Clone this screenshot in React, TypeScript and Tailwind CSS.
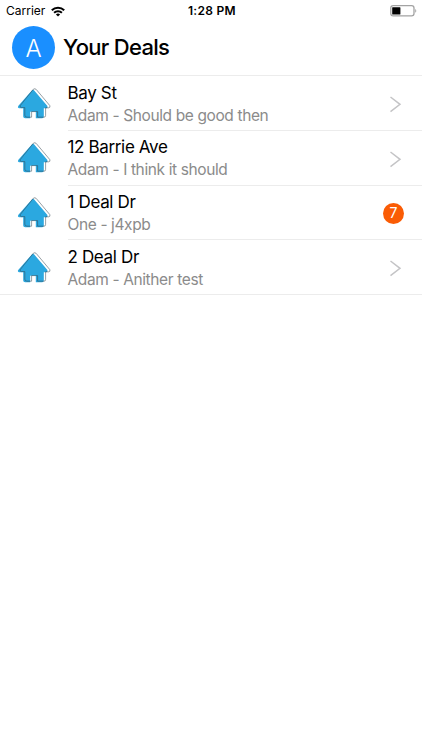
interface Deal {
  id: number;
  address: string;
  message: string;
  unread?: number;
}

const deals: Deal[] = [
  { id: 1, address: 'Bay St', message: 'Adam - Should be good then' },
  { id: 2, address: '12 Barrie Ave', message: 'Adam - I think it should' },
  { id: 3, address: '1 Deal Dr', message: 'One - j4xpb', unread: 7 },
  { id: 4, address: '2 Deal Dr', message: 'Adam - Anither test' },
];

function WifiIcon() {
  return (
    <svg width="14" height="11" viewBox="0 0 14 11" fill="none" stroke="#000" strokeWidth="2">
      <path d="M0.8 4.3a8.8 8.8 0 0 1 12.4 0" />
      <path d="M3.1 6.8a5.5 5.5 0 0 1 7.8 0" />
      <path d="M7 10.6 4.9 8.5a3 3 0 0 1 4.2 0Z" fill="#000" stroke="none" />
    </svg>
  );
}

function BatteryIcon() {
  return (
    <svg width="28" height="12" viewBox="0 0 28 12">
      <rect x="0.8" y="0.7" width="23.2" height="10.2" rx="2.4" fill="#fff" stroke="#a3a3a3" strokeWidth="1.3" />
      <rect x="2.2" y="2.2" width="8.2" height="7.3" rx="0.5" fill="#000" />
      <path d="M25.3 4c1.3.4 1.3 3.4 0 3.8Z" fill="#999" />
    </svg>
  );
}

function HouseIcon() {
  return (
    <svg width="34" height="32" viewBox="0 0 34 32">
      <path
        d="M14.8 2.4q1.2-1.2 2.4 0l13 15.4q1 2.2-1 2.4h-2.4v8.4q0 1.6-1.6 1.6h-6.4v-6.4h-5.6v6.4H8.2q-2 0-2-1.8v-8.2H2q-1.8-.4-.8-2.2Z"
        fill="#2ba8e0"
      />
      <path
        d="M16.4 1.2q1.4-1 2.8.2l13.6 16.2q.9 2-1.2 2.2h-3v7.6q0 1.8-1.6 1.8h-6.4v-5.6h-6v5.6H10q-2.2 0-2.2-2V19.6H4.2q-1.8-.3-.8-2.2Z"
        fill="none"
        stroke="#33434d"
        strokeWidth="0.6"
        strokeOpacity="0.85"
      />
    </svg>
  );
}

function Chevron() {
  return (
    <svg width="12" height="17" viewBox="0 0 12 17" fill="none" stroke="#c4c4c6" strokeWidth="1.5">
      <path d="M0.5 1 10 8.3 0.5 15.6" />
    </svg>
  );
}

function DealRow({ deal, last }: { deal: Deal; last: boolean }) {
  return (
    <li className={`flex h-[54.8px] ${last ? 'border-b border-[#ececec]' : ''}`}>
      <div className="flex w-[67.5px] shrink-0 justify-center pt-[11.5px]">
        <HouseIcon />
      </div>
      <div className={`flex flex-1 justify-between ${last ? '' : 'border-b border-[#ececec]'}`}>
        <div className="pt-[5.5px]">
          <h2 className="text-[17px] leading-[22px] tracking-[-0.35px] text-black">{deal.address}</h2>
          <p className="text-[15.5px] leading-[23px] tracking-[-0.38px] text-[#8b8b8b]">{deal.message}</p>
        </div>
        {deal.unread ? (
          <span className="mt-[17px] mr-[18px] flex size-[21px] items-center justify-center rounded-full bg-[#fa5c05] text-[14px] leading-none text-white">
            {deal.unread}
          </span>
        ) : (
          <div className="pt-5 pr-5">
            <Chevron />
          </div>
        )}
      </div>
    </li>
  );
}

export default function App() {
  return (
    <div className="min-h-screen bg-white font-['Inter','Liberation_Sans',sans-serif]">
      <div className="grid h-[22px] grid-cols-3 items-center pl-[6px] pr-[4px] text-[12px]">
        <div className="flex items-center gap-[6px]">
          <span>Carrier</span>
          <WifiIcon />
        </div>
        <span className="text-center font-semibold tracking-[0.3px]">1:28 PM</span>
        <div className="flex justify-end">
          <BatteryIcon />
        </div>
      </div>
      <header className="flex h-[54px] items-start gap-[8px] border-b border-[#ececec] pl-3 pt-[4px]">
        <div className="flex size-[43px] items-center justify-center rounded-full bg-[#1a8fff] pt-[2px] text-[24px] font-light text-white">
          A
        </div>
        <h1 className="text-[22px] font-medium leading-[43px] tracking-[-0.7px] text-black">Your Deals</h1>
      </header>
      <ul>
        {deals.map((deal, i) => (
          <DealRow key={deal.id} deal={deal} last={i === deals.length - 1} />
        ))}
      </ul>
    </div>
  );
}
